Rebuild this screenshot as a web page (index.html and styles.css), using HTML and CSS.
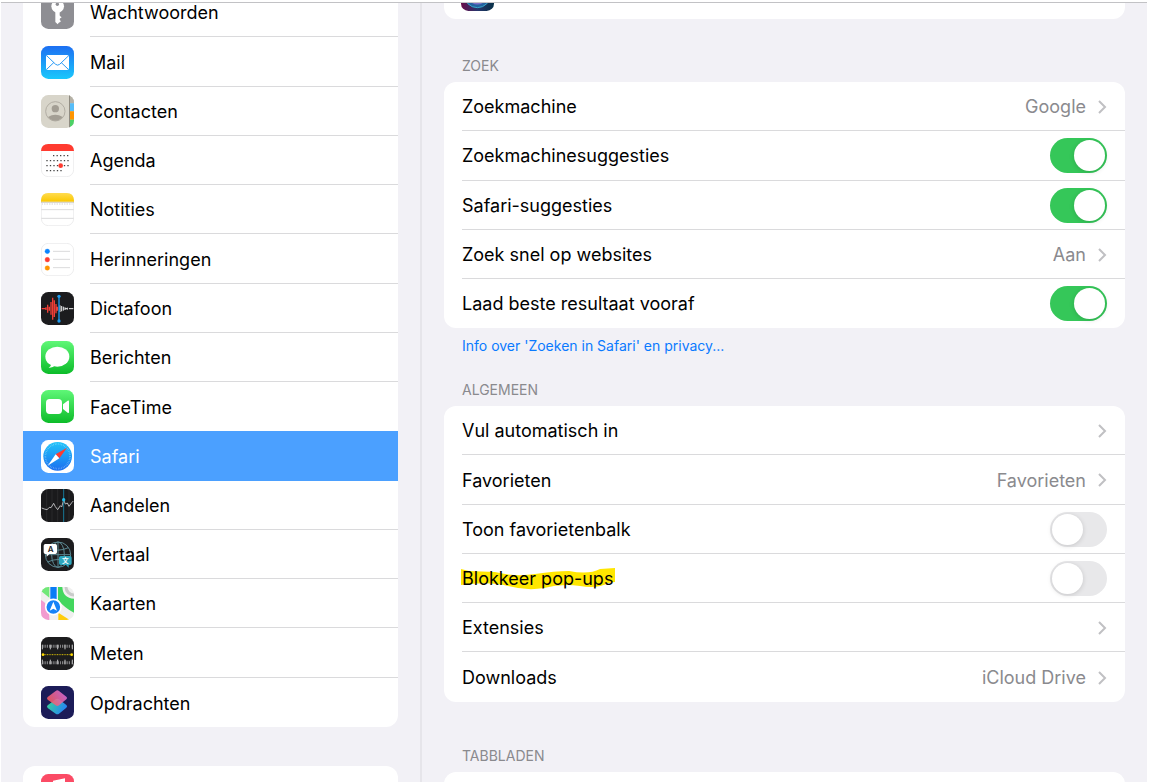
FILE: index.html
```html
<!DOCTYPE html>
<html lang="nl">
<head>
  <meta charset="UTF-8" />
  <meta name="viewport" content="width=device-width, initial-scale=1.0"/>
  <title>Instellingen - Safari</title>
  <link rel="stylesheet" href="styles.css">
</head>
<body>
  <div class="settings">
    <nav class="sidebar" aria-label="Apps">
      <ul class="group apps">
        <li><a href="#wachtwoorden">
          <svg class="icon" viewBox="0 0 99 99"><rect width="99" height="99" rx="22" fill="#8e8e93"/><circle cx="50" cy="31" r="19" fill="#fff"/><path d="M43 45h13v31l-6 9-7-7z" fill="#fff"/><path d="M54 58l8 6-8 6 6 6-8 6z" fill="#fff"/><circle cx="49" cy="25" r="5" fill="#8e8e93"/></svg>
          <span class="name">Wachtwoorden</span></a></li>
        <li><a href="#mail">
          <svg class="icon" viewBox="0 0 99 99"><defs><linearGradient id="mail" x2="0" y2="1"><stop stop-color="#1d6ff2"/><stop offset="1" stop-color="#1ac8fc"/></linearGradient></defs><rect width="99" height="99" rx="22" fill="url(#mail)"/><rect x="15" y="27" width="69" height="45" rx="6" fill="#fff"/><path d="M17 29l27 26q6 5 12 0l27-26M17 70l22-21M82 70L60 49" fill="none" stroke="#2a9bf6" stroke-width="3"/></svg>
          <span class="name">Mail</span></a></li>
        <li><a href="#contacten">
          <svg class="icon" viewBox="0 0 99 99"><defs><clipPath id="tile"><rect width="99" height="99" rx="22"/></clipPath></defs><g clip-path="url(#tile)"><path fill="#d8d5ca" d="M0 0h99v99H0z"/><path fill="#b5b1a6" d="M85 0h14v25H85z"/><path fill="#57bdf8" d="M87 25h12v24H87z"/><path fill="#ff9500" d="M87 49h12v25H87z"/><path fill="#4cd165" d="M87 74h12v25H87z"/><path fill="#8f8b81" d="M84 0h3v99h-3z"/></g><circle cx="43" cy="49" r="29" fill="none" stroke="#aaa59b" stroke-width="2.5"/><circle cx="43" cy="41" r="11" fill="#a39e94"/><path d="M21 66q22-13 44 0-9 11-22 11t-22-11z" fill="#a39e94"/></svg>
          <span class="name">Contacten</span></a></li>
        <li><a href="#agenda">
          <svg class="icon" viewBox="0 0 99 99"><rect x="1" y="1" width="97" height="97" rx="21" fill="#fff" stroke="#e4e4e6" stroke-width="2"/><path d="M0 21Q1 0 22 0h55q21 0 22 21z" fill="#ff3b30"/><path d="M36 35h47M16 50h67M16 65h67M16 80h46" stroke="#444" stroke-width="4" stroke-dasharray="4 6.5"/><circle cx="59" cy="65" r="7" fill="#ff3b30"/></svg>
          <span class="name">Agenda</span></a></li>
        <li><a href="#notities">
          <svg class="icon" viewBox="0 0 99 99"><defs><linearGradient id="note" x2="0" y2="1"><stop stop-color="#ffdc50"/><stop offset="1" stop-color="#fbc800"/></linearGradient></defs><rect x="1" y="1" width="97" height="97" rx="21" fill="#fff" stroke="#e4e4e6" stroke-width="2"/><path d="M0 26V22Q1 0 22 0h55q21 0 22 22v4z" fill="url(#note)"/><path d="M0 28h99" stroke="#bbb5a0" stroke-width="2"/><path d="M4 33h91" stroke="#bbb" stroke-width="3" stroke-dasharray="2 3"/><path d="M1 50h97M1 76h97" stroke="#d2d2d4" stroke-width="2.5"/></svg>
          <span class="name">Notities</span></a></li>
        <li><a href="#herinneringen">
          <svg class="icon" viewBox="0 0 99 99"><rect x="1" y="1" width="97" height="97" rx="21" fill="#fff" stroke="#e4e4e6" stroke-width="2"/><path d="M36 25h51M36 49h51M36 74h51" stroke="#d2d2d4" stroke-width="2.5"/><g stroke-width="3" stroke-opacity=".35"><circle cx="19" cy="25" r="7" fill="#0a84ff" stroke="#0a84ff"/><circle cx="19" cy="50" r="7" fill="#ff3b30" stroke="#ff3b30"/><circle cx="19" cy="75" r="7" fill="#ff9500" stroke="#ff9500"/></g></svg>
          <span class="name">Herinneringen</span></a></li>
        <li><a href="#dictafoon">
          <svg class="icon" viewBox="0 0 99 99"><rect width="99" height="99" rx="22" fill="#1c1c1e"/><path d="M2 50h12M15 46v8M20 38v24M25 44v12M30 30v38M35 17v66M40 25v50M45 36v28M49 44v12" stroke="#f03e36" stroke-width="4"/><path d="M57 40v20M62 42v16M67 44v12M72 46v8M72 50h6M79 47v6M84 50h13" stroke="#eee" stroke-width="3"/><path d="M54 12v76" stroke="#1d9bf0" stroke-width="4"/><circle cx="54" cy="13" r="5" fill="#1d9bf0"/><circle cx="54" cy="87" r="5" fill="#1d9bf0"/></svg>
          <span class="name">Dictafoon</span></a></li>
        <li><a href="#berichten">
          <svg class="icon" viewBox="0 0 99 99"><defs><linearGradient id="green" x2="0" y2="1"><stop stop-color="#5ff777"/><stop offset="1" stop-color="#0cbc29"/></linearGradient></defs><rect width="99" height="99" rx="22" fill="url(#green)"/><ellipse cx="49" cy="47" rx="36" ry="30" fill="#fff"/><path d="M30 68q1 8-7 13 13 0 20-8z" fill="#fff"/></svg>
          <span class="name">Berichten</span></a></li>
        <li><a href="#facetime">
          <svg class="icon" viewBox="0 0 99 99"><rect width="99" height="99" rx="22" fill="url(#green)"/><rect x="15" y="27" width="48" height="45" rx="11" fill="#fff"/><path d="M66 43l14-11q4-2 4 2v32q0 4-4 2L66 57z" fill="#fff"/></svg>
          <span class="name no-line">FaceTime</span></a></li>
        <li class="selected"><a href="#safari" aria-current="page">
          <svg class="icon" viewBox="0 0 99 99"><defs><linearGradient id="compass" x2="0" y2="1"><stop stop-color="#20c4f9"/><stop offset="1" stop-color="#1c6ff0"/></linearGradient></defs><rect width="99" height="99" rx="22" fill="#fff"/><circle cx="50" cy="49" r="43" fill="url(#compass)"/><circle cx="50" cy="49" r="37" fill="none" stroke="#fff" stroke-opacity=".45" stroke-width="5" stroke-dasharray="1.5 3.5"/><path d="M78 23L55 55 44 43z" fill="#ff3b30"/><path d="M20 77l24-34 11 12z" fill="#fff"/></svg>
          <span class="name no-line">Safari</span></a></li>
        <li><a href="#aandelen">
          <svg class="icon" viewBox="0 0 99 99"><rect width="99" height="99" rx="22" fill="#1a1a1c"/><path d="M17 2v95M33 0v99M50 0v99M84 3v93" stroke="#303033" stroke-width="2"/><path d="M2 57l8 3 8 2 7-7 5 1 8-13 5 10 7 9 8-12 4 4 6-21 5 12 6-3 5 10 9-12 4-4" fill="none" stroke="#d4d4d6" stroke-width="2.5"/><path d="M68 0v99" stroke="#188baf" stroke-width="2.5"/><circle cx="68" cy="32" r="5" fill="#23bde9"/></svg>
          <span class="name">Aandelen</span></a></li>
        <li><a href="#vertaal">
          <svg class="icon" viewBox="0 0 99 99"><rect width="99" height="99" rx="22" fill="#1c1c1e"/><g fill="none" stroke="#5b8791" stroke-width="3"><circle cx="51" cy="50" r="38"/><ellipse cx="51" cy="50" rx="19" ry="38"/><path d="M51 12v76M13 50h76M20 29q31 15 62 0M20 72q31-15 62 0"/></g><path d="M13 18h30q5 0 5 5v20q0 5-5 5H25l-8 8v-8h-4q-5 0-5-5V23q0-5 5-5z" fill="#fff"/><path d="M59 54h28q5 0 5 5v17q0 5-5 5h-4v8l-8-8H59q-5 0-5-5V59q0-5 5-5z" fill="#2ea6bd"/><text class="glyph" x="20" y="41" fill="#222">A</text><text class="glyph glyph-cjk" x="63" y="75" fill="#fff">文</text></svg>
          <span class="name">Vertaal</span></a></li>
        <li><a href="#kaarten">
          <svg class="icon" viewBox="0 0 99 99"><g clip-path="url(#tile)"><path fill="#f0f0ef" d="M0 0h99v99H0z"/><path d="M0 0h25v32L0 12z" fill="#71e878"/><path d="M51 0h13q2 34 35 35v42Q70 62 51 38z" fill="#43d75e"/><path d="M0 39q26 13 25 60H0z" fill="#f29bd0"/><path d="M52 77l34 22H52z" fill="#ffcc0a"/><circle cx="99" cy="0" r="24" fill="none" stroke="#c9cbca" stroke-width="9"/><path d="M28 0h19v47H28z" fill="#0a7cf5"/></g><circle cx="37" cy="60" r="23" fill="#1683f7" stroke="#fff" stroke-width="5"/><path d="M37 44l11 27-11-6-11 6z" fill="#fff"/></svg>
          <span class="name">Kaarten</span></a></li>
        <li><a href="#meten">
          <svg class="icon" viewBox="0 0 99 99"><rect width="99" height="99" rx="22" fill="#1c1c1e"/><path d="M4 23v14M28 23v14M50 23v14M72 23v14M94 23v14M4 68v14M28 68v14M50 68v14M72 68v14M94 68v14" stroke="#e4e4e4" stroke-width="2.5"/><path d="M8 28h83M8 77h83" stroke="#b5b5b7" stroke-width="9" stroke-dasharray="2 3.5"/><path d="M8 53h83" stroke="#d2ba08" stroke-width="3" stroke-dasharray="3 2"/><circle cx="6" cy="53" r="4" fill="#ffdb00"/><circle cx="92" cy="53" r="4" fill="#ffdb00"/></svg>
          <span class="name">Meten</span></a></li>
        <li><a href="#opdrachten">
          <svg class="icon" viewBox="0 0 99 99"><defs><linearGradient id="sc1" x1="0" y1=".7" x2="1" y2=".2"><stop stop-color="#fa5b57"/><stop offset="1" stop-color="#d86de0"/></linearGradient><linearGradient id="sc2" x2="1" y2=".4"><stop stop-color="#39d98e"/><stop offset="1" stop-color="#2686f3"/></linearGradient></defs><rect width="99" height="99" rx="22" fill="#1c1c58"/><path d="M20 58l24-18q5-4 10 0l22 17q5 4 0 8L54 83q-5 4-10 0L20 66q-4-4 0-8z" fill="url(#sc2)"/><path d="M20 33l24-18q5-4 10 0l22 17q5 4 0 8L54 58q-5 4-10 0L20 41q-4-4 0-8z" fill="url(#sc1)" fill-opacity=".88"/></svg>
          <span class="name no-line">Opdrachten</span></a></li>
      </ul>

      <ul class="group media">
        <li><a href="#muziek" aria-label="Muziek">
          <svg class="icon" viewBox="0 0 99 99"><rect width="99" height="99" rx="22" fill="#fb4b65"/><path d="M36 20l36-7v53a11 9 0 1 1-6-8V29l-24 5v39a11 9 0 1 1-6-8z" fill="#fff"/></svg>
          <span class="name no-line"></span></a></li>
      </ul>
    </nav>

    <main class="content">
      <section class="group siri">
        <svg class="icon" viewBox="0 0 99 99" role="img" aria-label="Siri"><defs><linearGradient id="siri" x2="1"><stop stop-color="#690c49"/><stop offset=".5" stop-color="#27366d"/><stop offset="1" stop-color="#073047"/></linearGradient></defs><rect width="99" height="99" rx="22" fill="url(#siri)"/><circle cx="49" cy="49" r="40" fill="#2462a0" stroke="#39a8c8" stroke-width="3"/><path d="M15 55q34 44 69 0" fill="none" stroke="#7e70c9" stroke-width="5"/></svg>
      </section>

      <h2 class="section-title first">ZOEK</h2>
      <ul class="group options">
        <li><a href="#zoekmachine">Zoekmachine <span class="value">Google</span><svg class="chevron" viewBox="0 0 9 15"><path d="M1 1l6 6-6 6"/></svg></a></li>
        <li><label for="suggesties">Zoekmachinesuggesties</label><input type="checkbox" class="switch" id="suggesties" checked></li>
        <li><label for="safariSuggesties">Safari-suggesties</label><input type="checkbox" class="switch" id="safariSuggesties" checked></li>
        <li><a href="#zoeksnel">Zoek snel op websites <span class="value">Aan</span><svg class="chevron" viewBox="0 0 9 15"><path d="M1 1l6 6-6 6"/></svg></a></li>
        <li><label for="vooraf">Laad beste resultaat vooraf</label><input type="checkbox" class="switch" id="vooraf" checked></li>
      </ul>
      <p class="footnote"><a href="#privacy">Info over 'Zoeken in Safari' en privacy...</a></p>

      <h2 class="section-title after-note">ALGEMEEN</h2>
      <ul class="group options">
        <li><a href="#vul">Vul automatisch in <span class="value"></span><svg class="chevron" viewBox="0 0 9 15"><path d="M1 1l6 6-6 6"/></svg></a></li>
        <li><a href="#favorieten">Favorieten <span class="value">Favorieten</span><svg class="chevron" viewBox="0 0 9 15"><path d="M1 1l6 6-6 6"/></svg></a></li>
        <li><label for="balk">Toon favorietenbalk</label><input type="checkbox" class="switch" id="balk"></li>
        <li><label for="popups"><span class="marker"><svg viewBox="0 0 154 22" preserveAspectRatio="none"><path d="M0 1L8 3 34 4Q54 9 74 6T108 3Q128 7 139 1L154 0V14L147 15Q137 21 119 18T83 20Q66 23 47 18T0 17z" fill="#ffe600"/></svg>Blokkeer pop-ups</span></label><input type="checkbox" class="switch" id="popups"></li>
        <li><a href="#extensies">Extensies <span class="value"></span><svg class="chevron" viewBox="0 0 9 15"><path d="M1 1l6 6-6 6"/></svg></a></li>
        <li><a href="#downloads">Downloads <span class="value">iCloud Drive</span><svg class="chevron" viewBox="0 0 9 15"><path d="M1 1l6 6-6 6"/></svg></a></li>
      </ul>

      <h2 class="section-title">TABBLADEN</h2>
      <ul class="group options">
        <li></li>
      </ul>
    </main>
  </div>
</body>
</html>
```
FILE: styles.css
```css
:root {
  --bg: #f2f1f6;
  --line: #dadadc;
  --muted: #8a8a8e;
  --blue: #0a7aff;
  --selected: #4ba0ff;
  --green: #35c759;
}

* {
  box-sizing: border-box;
}

body {
  margin: 0;
  padding-top: 2px;
  height: 100vh;
  overflow: hidden;
  background-color: #fff;
  color: #000;
  font-family: Inter, "Liberation Sans", sans-serif;
  font-size: 18px;
  line-height: 24px;
}

.settings {
  display: grid;
  grid-template-columns: 421px 1fr;
  height: 100%;
  margin: 0 5px 0 1px;
  border-top: 1px solid #c2c2c5;
  background-color: var(--bg);
  overflow: hidden;
}

.sidebar {
  padding: 0 22px;
  border-right: 2px solid #e6e5ea;
  overflow: hidden;
}

.content {
  padding: 0 22px;
  overflow: hidden;
}

a {
  color: inherit;
  text-decoration: none;
}

.group {
  list-style: none;
  margin: 0;
  padding: 0;
  background-color: #fff;
  border-radius: 12px;
  overflow: hidden;
}

.group li {
  display: flex;
  min-height: 49px;
}

.group li:nth-child(4n+2) {
  min-height: 50px;
}

.icon {
  flex: none;
  width: 33px;
  height: 33px;
}

/* sidebar */
.apps {
  margin-top: -15px;
}

.media {
  margin-top: 39px;
}

.sidebar li a {
  display: flex;
  flex: 1;
  align-items: center;
  gap: 16px;
  padding-left: 18px;
}

.name {
  display: flex;
  flex: 1;
  align-items: center;
  align-self: stretch;
  padding-top: 2px;
  border-bottom: 1px solid var(--line);
}

.name.no-line {
  border-bottom: none;
}

.sidebar .selected {
  background-color: var(--selected);
  color: #fff;
}

.glyph {
  font-size: 24px;
  font-weight: 600;
}

.glyph-cjk {
  font-family: "Noto Sans CJK SC", sans-serif;
  font-size: 20px;
}

/* right side */
.siri {
  display: flex;
  align-items: center;
  height: 49px;
  margin-top: -33px;
  padding-left: 17px;
}

.section-title {
  margin: 44px 0 6px 18px;
  color: var(--muted);
  font-size: 14px;
  font-weight: 400;
  line-height: 20px;
}

.section-title.first {
  margin-top: 37px;
}

.section-title.after-note {
  margin-top: 24px;
}

.options li {
  align-items: center;
  margin-left: 18px;
  padding-right: 18px;
  border-bottom: 1px solid var(--line);
}

.options li:last-child {
  border-bottom: none;
}

.options li a {
  display: flex;
  flex: 1;
  align-items: center;
  padding-top: 2px;
}

.options label {
  flex: 1;
  padding-top: 1px;
}

.value {
  margin-left: auto;
  color: var(--muted);
}

.chevron {
  width: 9px;
  height: 15px;
  margin-left: 12px;
  fill: none;
  stroke: #c0c0c3;
  stroke-width: 2;
}

.switch {
  appearance: none;
  display: flex;
  width: 57px;
  height: 35px;
  margin: 0;
  padding: 2px;
  border-radius: 18px;
  background-color: #e8e8ea;
  cursor: pointer;
}

.switch::before {
  content: "";
  width: 31px;
  height: 31px;
  border-radius: 50%;
  background-color: #fff;
  box-shadow: 0 1px 5px rgba(0, 0, 0, 0.15);
}

.switch:checked {
  justify-content: flex-end;
  background-color: var(--green);
}

.footnote {
  margin: 8px 0 0 18px;
  color: var(--blue);
  font-size: 14px;
  line-height: 20px;
}

/* yellow marker stroke behind the label */
.marker {
  position: relative;
  z-index: 0;
}

.marker svg {
  position: absolute;
  z-index: -1;
  left: -1px;
  top: 0;
  width: 154px;
  height: 22px;
}
```
